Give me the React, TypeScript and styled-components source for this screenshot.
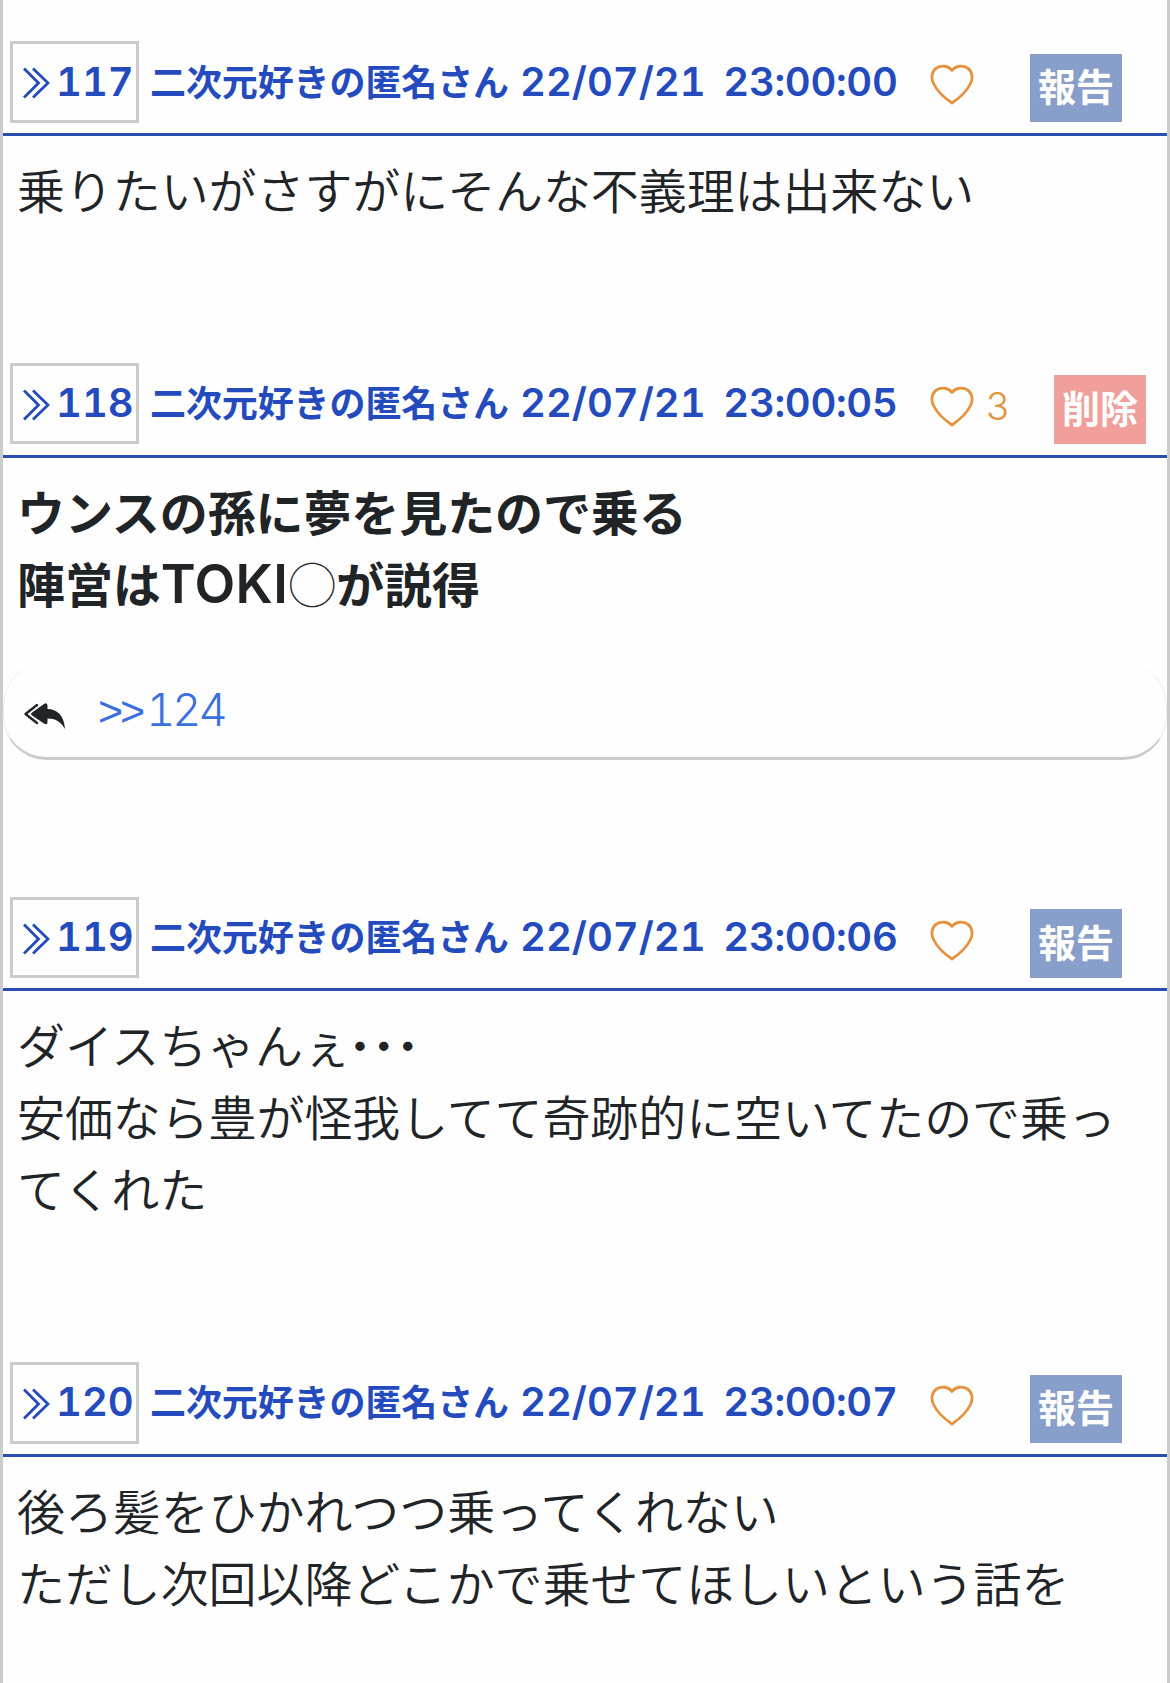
import React from "react";
import styled, { createGlobalStyle } from "styled-components";

const Global = createGlobalStyle`
  *, *::before, *::after { box-sizing: border-box; }
  body { margin: 0; background: #fefefe; font-family: "Noto Sans CJK JP", sans-serif; }
`;

const Thread = styled.main`
  height: 1683px;
  padding-top: 41px;
  overflow: hidden;
  border-left: 3px solid #cbcbcb;
  border-right: 3px solid #cbcbcb;
  color: #212427;
`;

const Post = styled.article<{ $height: number }>`
  height: ${(p) => p.$height}px;
`;

const Header = styled.header<{ $height: number }>`
  display: flex;
  align-items: flex-start;
  height: ${(p) => p.$height}px;
  padding-left: 7px;
  border-bottom: 3px solid #2a4db0;
  color: #244bbd;
`;

const NumberBox = styled.a<{ $height: number }>`
  display: flex;
  flex: none;
  width: 129px;
  height: ${(p) => p.$height}px;
  padding-left: 10px;
  border: 3px solid #cbcbcb;
`;

const Chevrons = styled.svg`
  flex: none;
  width: 27px;
  height: 32px;
  margin: 23px 6px 0 0;
`;

const Digits = styled.span<{ $line: number }>`
  font-family: Inter, sans-serif;
  font-size: 40px;
  font-weight: 600;
  font-feature-settings: "tnum", "calt" 0;
  line-height: ${(p) => p.$line}px;
  white-space: pre;
`;

const Name = styled.span<{ $line: number }>`
  flex: none;
  margin: 1px 0 0 11px;
  width: 360px;
  font-size: 36px;
  font-weight: 700;
  letter-spacing: -0.1px;
  line-height: ${(p) => p.$line}px;
  white-space: nowrap;
`;

const Stamp = styled(Digits)`
  display: flex;
  flex: none;
  justify-content: space-between;
  width: 378px;
  margin: 3px 0 0 10px;
`;

const Colon = styled.span`
  font-feature-settings: "tnum" 0, "calt" 0;
  margin: 0 -1.5px;
`;

const Like = styled.span`
  display: flex;
  flex: none;
  width: 100px;
  margin: 23px 0 0 32px;
  gap: 12px;
  color: #e39440;
`;

const HeartIcon = styled.svg`
  flex: none;
  width: 44px;
  height: 42px;
`;

const LikeCount = styled.span`
  font-family: Inter, sans-serif;
  font-size: 38px;
  font-weight: 350;
  line-height: 40px;
`;

const Action = styled.button<{ $danger?: boolean; $tall: boolean }>`
  flex: none;
  width: 92px;
  height: ${(p) => (p.$tall ? 69 : 68)}px;
  margin: ${(p) => (p.$tall ? 12 : 13)}px 0 0 ${(p) => (p.$danger ? 24 : 0)}px;
  padding: 0 0 6px;
  border: 0;
  border-radius: 0;
  background: ${(p) => (p.$danger ? "#f09f9b" : "#899fcb")};
  color: #fff;
  font-family: inherit;
  font-size: 38px;
  font-weight: 700;
  line-height: 62px;
`;

const Body = styled.p<{ $bold?: boolean }>`
  margin: 0;
  padding: 16px 10px 0 14px;
  font-size: 48px;
  font-weight: ${(p) => (p.$bold ? 700 : 350)};
  letter-spacing: -0.1px;
  line-height: 72px;
  white-space: pre-line;
`;

const Latin = styled.span`
  font-family: Inter, sans-serif;
  font-size: 53px;
  font-weight: 600;
  letter-spacing: 0.4px;
  line-height: 0;
`;

const Circle = styled.span`
  font-weight: 300;
`;

const Dots = styled.span`
  margin-left: -3px;
  font-weight: 700;
`;

const Replies = styled.div`
  display: flex;
  height: 98px;
  margin-top: 44px;
  padding-left: 19px;
  border-style: solid;
  border-width: 0 1px 3px;
  border-color: transparent #ececec #cbcbcb;
  border-radius: 44px;
`;

const ReplyIcon = styled.svg`
  width: 44px;
  height: 28px;
  margin: 41px 31px 0 0;
`;

const ReplyLink = styled.a`
  color: #3a6fe0;
  font-family: Inter, sans-serif;
  font-size: 45px;
  font-weight: 350;
  line-height: 96px;
  letter-spacing: -3px;
  font-feature-settings: "tnum", "calt" 0;
`;

const Quote = styled.span`
  margin-right: 4px;
  font-family: "Liberation Sans", sans-serif;
  font-size: 43px;
`;

interface PostData {
  no: number;
  time: string;
  likes?: number;
  own?: boolean;
  height: number;
  headHeight: number;
  boxHeight: number;
  tallAction: boolean;
  line: number;
  text: React.ReactNode;
  reply?: number;
}

const posts: PostData[] = [
  {
    no: 117,
    time: "23:00:00",
    height: 322,
    headHeight: 95,
    boxHeight: 82,
    tallAction: false,
    line: 76,
    text: "乗りたいがさすがにそんな不義理は出来ない",
  },
  {
    no: 118,
    time: "23:00:05",
    likes: 3,
    own: true,
    height: 534,
    headHeight: 95,
    boxHeight: 81,
    tallAction: true,
    line: 74,
    reply: 124,
    text: (
      <>
        ウンスの孫に夢を見たので乗る{"\n"}陣営は<Latin>TOKI</Latin>
        <Circle>◯</Circle>が説得
      </>
    ),
  },
  {
    no: 119,
    time: "23:00:06",
    height: 465,
    headHeight: 94,
    boxHeight: 81,
    tallAction: true,
    line: 74,
    text: (
      <>
        ダイスちゃんぇ<Dots>･･･</Dots>
        {"\n"}安価なら豊が怪我してて奇跡的に空いてたので乗ってくれた
      </>
    ),
  },
  {
    no: 120,
    time: "23:00:07",
    height: 321,
    headHeight: 95,
    boxHeight: 82,
    tallAction: false,
    line: 74,
    text: "後ろ髪をひかれつつ乗ってくれない\nただし次回以降どこかで乗せてほしいという話を",
  },
];

function Clock({ time }: { time: string }) {
  const [h, m, s] = time.split(":");
  return (
    <span>
      {h}
      <Colon>:</Colon>
      {m}
      <Colon>:</Colon>
      {s}
    </span>
  );
}

function PostItem({ post }: { post: PostData }) {
  return (
    <Post $height={post.height}>
      <Header $height={post.headHeight}>
        <NumberBox $height={post.boxHeight}>
          <Chevrons viewBox="0 0 27 32" fill="none" stroke="currentColor" strokeWidth="2.8">
            <path d="M1 1.500 15.500 16 1 30.500M10 1.500 25 16 10 30.500" />
          </Chevrons>
          <Digits $line={post.line}>{post.no}</Digits>
        </NumberBox>
        <Name $line={post.line}>二次元好きの匿名さん</Name>
        <Stamp $line={post.line}>
          <span>22/07/21</span>
          <Clock time={post.time} />
        </Stamp>
        <Like>
          <HeartIcon viewBox="0 0 44 42" fill="none" stroke="currentColor" strokeWidth="2.8" strokeLinejoin="round">
            <path d="M22 6.500C18.500 1.500 11 1 6.500 4C1.500 7.500 .8 14 3.500 19.500C7 27 14 33.500 22 39C30 33.500 37 27 40.500 19.500C43.200 14 42.500 7.500 37.500 4C33 1 25.500 1.500 22 6.500Z" />
          </HeartIcon>
          {post.likes && <LikeCount>{post.likes}</LikeCount>}
        </Like>
        <Action $danger={post.own} $tall={post.tallAction}>
          {post.own ? "削除" : "報告"}
        </Action>
      </Header>
      <Body $bold={post.own}>{post.text}</Body>
      {post.reply && (
        <Replies>
          <ReplyIcon viewBox="0 0 44 28" fill="none">
            <path d="M14 2 2.500 11 14 20" stroke="currentColor" strokeWidth="2.400" strokeLinecap="round" strokeLinejoin="round" />
            <path d="M9 9.500 21 1Q24.500-1 24.500 3V6C34 6 41 12 42 26C38 18.500 32 15.500 24.500 15.500V19Q24.500 22.500 21 20.500L9 12.500Q7 11 9 9.500Z" fill="currentColor" />
          </ReplyIcon>
          <ReplyLink>
            <Quote>&gt;&gt;</Quote>
            {post.reply}
          </ReplyLink>
        </Replies>
      )}
    </Post>
  );
}

export default function App() {
  return (
    <>
      <Global />
      <Thread>
        {posts.map((post) => (
          <PostItem key={post.no} post={post} />
        ))}
      </Thread>
    </>
  );
}
